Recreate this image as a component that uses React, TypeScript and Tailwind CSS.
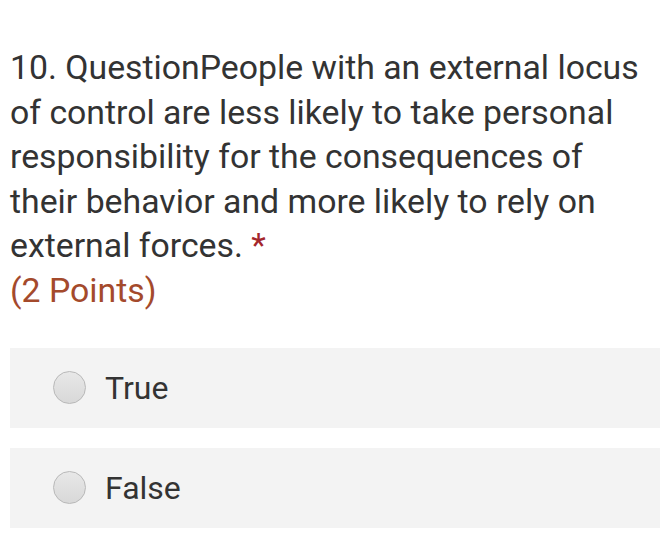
export default function App() {
  const options = ["True", "False"];
  return (
    <div
      className="w-[660px] h-[537px] bg-white pt-[46px] pl-[10px] text-[#333333]"
      style={{ fontFamily: "Roboto, 'Noto Sans', sans-serif" }}
    >
      <div className="text-[33.8px] leading-[44.5px] pr-[4px]">
        10. QuestionPeople with an external locus of control are less likely to take
        personal responsibility for the consequences of their behavior and more likely
        to rely on external forces. <span className="text-[#a4262c]">*</span>
      </div>
      <div className="text-[33.8px] leading-[44px] text-[#a44a2c]">(2 Points)</div>
      <div className="mt-[35px] flex flex-col gap-[20px]">
        {options.map((o) => (
          <div key={o} className="h-[80px] bg-[#f3f3f3] flex items-center pl-[43px]">
            <span className="w-[33px] h-[33px] rounded-full border border-[#b8b8b8] bg-gradient-to-b from-[#e8e8e8] to-[#d8d8d8]" />
            <span className="ml-[19px] text-[32px] text-[#333333]">{o}</span>
          </div>
        ))}
      </div>
    </div>
  );
}
